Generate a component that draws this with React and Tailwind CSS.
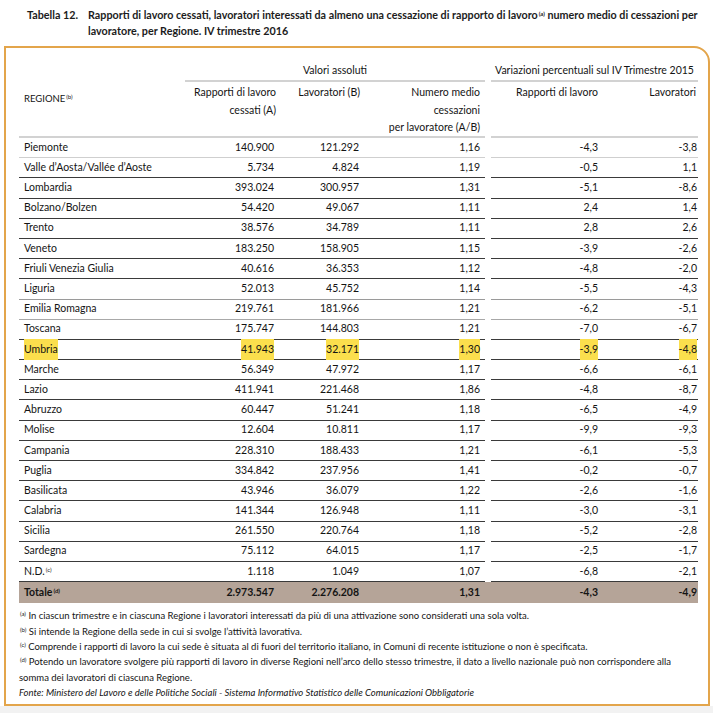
import React from "react";

const rows = [
  ["Piemonte", "140.900", "121.292", "1,16", "-4,3", "-3,8"],
  ["Valle d’Aosta/Vallée d’Aoste", "5.734", "4.824", "1,19", "-0,5", "1,1"],
  ["Lombardia", "393.024", "300.957", "1,31", "-5,1", "-8,6"],
  ["Bolzano/Bolzen", "54.420", "49.067", "1,11", "2,4", "1,4"],
  ["Trento", "38.576", "34.789", "1,11", "2,8", "2,6"],
  ["Veneto", "183.250", "158.905", "1,15", "-3,9", "-2,6"],
  ["Friuli Venezia Giulia", "40.616", "36.353", "1,12", "-4,8", "-2,0"],
  ["Liguria", "52.013", "45.752", "1,14", "-5,5", "-4,3"],
  ["Emilia Romagna", "219.761", "181.966", "1,21", "-6,2", "-5,1"],
  ["Toscana", "175.747", "144.803", "1,21", "-7,0", "-6,7"],
  ["Umbria", "41.943", "32.171", "1,30", "-3,9", "-4,8"],
  ["Marche", "56.349", "47.972", "1,17", "-6,6", "-6,1"],
  ["Lazio", "411.941", "221.468", "1,86", "-4,8", "-8,7"],
  ["Abruzzo", "60.447", "51.241", "1,18", "-6,5", "-4,9"],
  ["Molise", "12.604", "10.811", "1,17", "-9,9", "-9,3"],
  ["Campania", "228.310", "188.433", "1,21", "-6,1", "-5,3"],
  ["Puglia", "334.842", "237.956", "1,41", "-0,2", "-0,7"],
  ["Basilicata", "43.946", "36.079", "1,22", "-2,6", "-1,6"],
  ["Calabria", "141.344", "126.948", "1,11", "-3,0", "-3,1"],
  ["Sicilia", "261.550", "220.764", "1,18", "-5,2", "-2,8"],
  ["Sardegna", "75.112", "64.015", "1,17", "-2,5", "-1,7"],
  ["N.D.", "1.118", "1.049", "1,07", "-6,8", "-2,1"],
];

const lineClass = [
  "border-[#cfcfcf]",
  "border-[#3a3a3a]",
  "border-[#3a3a3a]",
  "border-[#3a3a3a]",
  "border-[#3a3a3a]",
  "border-[#3a3a3a]",
  "border-[#3a3a3a]",
  "border-[#9a9a9a]",
  "border-[#a8a8a8]",
  "border-[#3a3a3a]",
  "border-[#3a3a3a]",
  "border-[#3a3a3a]",
  "border-[#3a3a3a]",
  "border-[#3a3a3a]",
  "border-[#3a3a3a]",
  "border-[#3a3a3a]",
  "border-[#3a3a3a]",
  "border-[#3a3a3a]",
  "border-[#3a3a3a]",
  "border-[#3a3a3a]",
  "border-[#3a3a3a]",
  "border-[#3a3a3a]",
];

function Sup({ children }) {
  return <sup className="text-[6px] leading-none ml-[1px]">{children}</sup>;
}

function Hl({ on, children }) {
  if (!on) return <span>{children}</span>;
  return <span className="bg-[#fbdf4d] py-[3px]">{children}</span>;
}

function Row({ r, i }) {
  const b = "border-b " + lineClass[i];
  const hl = r[0] === "Umbria";
  return (
    <div className="flex h-[20.2px] items-center">
      <div className={"w-[166px] h-full flex items-center pl-[5px] " + b}>
        <Hl on={hl}>
          {r[0] === "N.D." ? (
            <>
              N.D.<Sup>(c)</Sup>
            </>
          ) : (
            r[0]
          )}
        </Hl>
      </div>
      <div className={"w-[95px] h-full flex items-center justify-end pr-[6px] " + b}>
        <Hl on={hl}>{r[1]}</Hl>
      </div>
      <div className={"w-[85px] h-full flex items-center justify-end pr-[6px] " + b}>
        <Hl on={hl}>{r[2]}</Hl>
      </div>
      <div className={"w-[120px] h-full flex items-center justify-end pr-[5px] " + b}>
        <Hl on={hl}>{r[3]}</Hl>
      </div>
      <div className="w-[6px] h-full" />
      <div className={"w-[113px] h-full flex items-center justify-end pr-[6px] " + b}>
        <Hl on={hl}>{r[4]}</Hl>
      </div>
      <div className={"w-[94px] h-full flex items-center justify-end pr-[1px] " + b}>
        <Hl on={hl}>{r[5]}</Hl>
      </div>
    </div>
  );
}

export default function App() {
  return (
    <div className="w-[713px] h-[713px] bg-white flex flex-col text-[#141414] [font-family:Lato,sans-serif]">
      <div className="flex pt-[7px] pl-[27px] text-[10.75px] font-bold leading-[16px] text-[#1c1c1c] whitespace-nowrap">
        <div className="w-[61px] shrink-0">Tabella 12.</div>
        <div>
          <div>
            Rapporti di lavoro cessati, lavoratori interessati da almeno una cessazione di rapporto di lavoro
            <Sup>(a)</Sup> numero medio di cessazioni per
          </div>
          <div>lavoratore, per Regione. IV trimestre 2016</div>
        </div>
      </div>

      <div className="mt-[7px] ml-[4px] w-[706px] h-[660px] shrink-0 border-2 border-[#e3a54b] rounded-tr-[16px] pl-[13px] pr-[10px] pt-[14px] text-[10.5px]">
        {/* header */}
        <div className="flex">
          <div className="w-[166px] h-[76px] flex items-center pl-[5px] border-b-2 border-[#d2d2d2] text-[9.5px]">
            <span>
              REGIONE<Sup>(b)</Sup>
            </span>
          </div>
          <div className="w-[300px] flex flex-col">
            <div className="h-[20px] flex items-center justify-center border-b-2 border-[#d2d2d2]">
              Valori assoluti
            </div>
            <div className="flex h-[56px] border-b-2 border-[#d2d2d2] leading-[17.5px] pt-[2px]">
              <div className="w-[95px] text-right pr-[4px]">
                Rapporti di lavoro
                <br />
                cessati (A)
              </div>
              <div className="w-[85px] text-right pr-[5px]">Lavoratori (B)</div>
              <div className="w-[120px] text-right pr-[5px]">
                Numero medio
                <br />
                cessazioni
                <br />
                per lavoratore (A/B)
              </div>
            </div>
          </div>
          <div className="w-[6px]" />
          <div className="w-[207px] flex flex-col">
            <div className="h-[20px] flex items-center justify-center border-b-2 border-[#d2d2d2]">
              Variazioni percentuali sul IV Trimestre 2015
            </div>
            <div className="flex h-[56px] border-b-2 border-[#d2d2d2] leading-[17.5px] pt-[2px]">
              <div className="w-[113px] text-right pr-[6px]">Rapporti di lavoro</div>
              <div className="w-[94px] text-right pr-[2px]">Lavoratori</div>
            </div>
          </div>
        </div>

        {/* body */}
        {rows.map((r, i) => (
          <Row key={r[0]} r={r} i={i} />
        ))}

        {/* totale */}
        <div className="flex h-[21px] items-center bg-[#b5a498] font-bold">
          <div className="w-[166px] pl-[5px]">
            Totale<Sup>(d)</Sup>
          </div>
          <div className="w-[95px] text-right pr-[6px]">2.973.547</div>
          <div className="w-[85px] text-right pr-[6px]">2.276.208</div>
          <div className="w-[120px] text-right pr-[5px]">1,31</div>
          <div className="w-[6px]" />
          <div className="w-[113px] text-right pr-[6px]">-4,3</div>
          <div className="w-[94px] text-right pr-[1px]">-4,9</div>
        </div>

        {/* footnotes */}
        <div className="mt-[5px] text-[9.5px] leading-[15.4px]">
          <div>
            <Sup>(a)</Sup> In ciascun trimestre e in ciascuna Regione i lavoratori interessati da più di una attivazione sono considerati una sola volta.
          </div>
          <div>
            <Sup>(b)</Sup> Si intende la Regione della sede in cui si svolge l’attività lavorativa.
          </div>
          <div>
            <Sup>(c)</Sup> Comprende i rapporti di lavoro la cui sede è situata al di fuori del territorio italiano, in Comuni di recente istituzione o non è specificata.
          </div>
          <div>
            <Sup>(d)</Sup> Potendo un lavoratore svolgere più rapporti di lavoro in diverse Regioni nell’arco dello stesso trimestre, il dato a livello nazionale può non corrispondere alla somma dei lavoratori di ciascuna Regione.
          </div>
          <div className="italic">
            Fonte: Ministero del Lavoro e delle Politiche Sociali - Sistema Informativo Statistico delle Comunicazioni Obbligatorie
          </div>
        </div>
      </div>
      <div className="flex-1 bg-[#f2f2f2]" />
    </div>
  );
}
